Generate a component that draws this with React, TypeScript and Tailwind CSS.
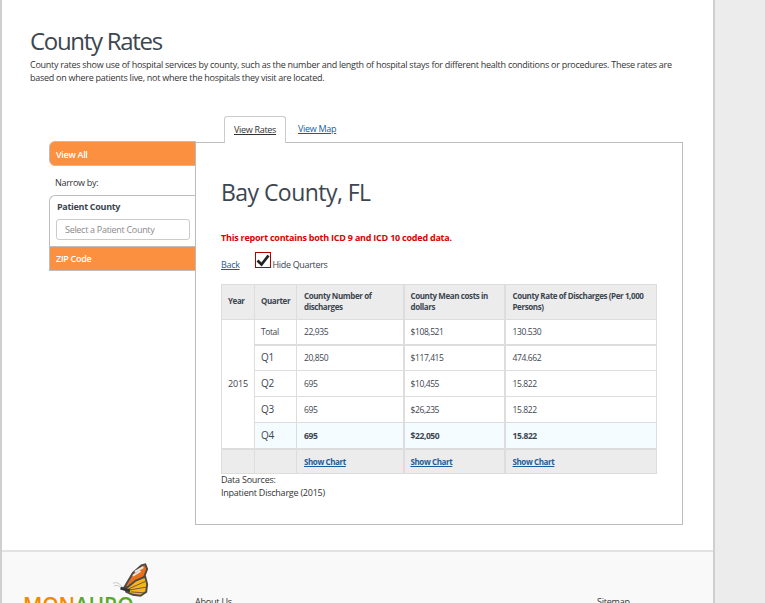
import React from "react";

const font = { fontFamily: '"Open Sans", sans-serif' };

const rows = [
  { q: "Total", n: "22,935", m: "$108,521", r: "130.530", h: "h-[25px]", thick: true, small: true },
  { q: "Q1", n: "20,850", m: "$117,415", r: "474.662", h: "h-[26px]" },
  { q: "Q2", n: "695", m: "$10,455", r: "15.822", h: "h-[26px]" },
  { q: "Q3", n: "695", m: "$26,235", r: "15.822", h: "h-[26px]" },
  { q: "Q4", n: "695", m: "$22,050", r: "15.822", h: "h-[26px]", bold: true },
];

const Butterfly = () => (
  <svg width="38" height="35" viewBox="0 0 40 36" className="absolute left-[110px] top-[11px]">
    <path d="M1 21 C4 19 8 21 11 25 M2 24 C5 22 8 24 11 27" fill="none" stroke="#c4c4c4" strokeWidth="1" />
    <path d="M13 25 L22 10 L31 2 L35 1 L37 6 L34 14 L27 18 L17 25 Z" fill="#e8701a" stroke="#4a4a4a" strokeWidth="2" />
    <path d="M14 27 L25 18 L35 14 L37 22 L36 30 L30 34 L22 33 L15 30 Z" fill="#f9b41c" stroke="#4a4a4a" strokeWidth="2" />
    <path d="M17 27 L35 19 M18 28 L36 25 M20 30 L34 31" stroke="#6a5a3a" strokeWidth="1" />
    <path d="M24 9 L33 4 M22 13 L30 8" stroke="#e8e8e8" strokeWidth="2" />
    <path d="M9 26 L19 29" stroke="#333" strokeWidth="3" />
  </svg>
);

export default function App() {
  return (
    <div className="h-[603px] w-[765px] overflow-hidden bg-[#ececec] text-[#3c4650]" style={font}>
      <div className="h-[603px] w-[715px] border-x-2 border-[#cfcfcf] bg-white">
        <div className="h-[550px] pl-[28px] pt-[24px]">
          <h1 className="text-[24px] leading-[34px] tracking-[-1.3px] text-[#3c4650]">County Rates</h1>
          <p className="w-[650px] text-[9px] leading-[13px] tracking-[-0.265px] text-[#333]">
            County rates show use of hospital services by county, such as the number and length of hospital stays for different health conditions or procedures. These rates are based on where patients live, not where the hospitals they visit are located.
          </p>

          <div className="mt-[32px] ml-[19px] flex items-start">
            <div className="mt-[25px] w-[147px] shrink-0 text-[9px] tracking-[-0.3px]">
              <div className="h-[25px] rounded-tl-[6px] rounded-bl-[6px] border border-[#bdbdbd] bg-[#fa9040] pl-[6px] font-semibold leading-[25px] text-white">
                View All
              </div>
              <div className="h-[29px] pl-[6px] leading-[33px] text-[#333]">Narrow by:</div>
              <div className="rounded-tl-[6px] border-l border-t border-[#bdbdbd] bg-white">
                <div className="pl-[7px] pt-[4px] font-bold leading-[13px]">Patient County</div>
                <div className="ml-[6px] mt-[6px] h-[21px] w-[134px] rounded-[3px] border border-[#ccc] pl-[8px] leading-[19px] text-[#8a8a8a]">
                  Select a Patient County
                </div>
                <div className="mt-[6px] h-[25px] border-y border-[#bdbdbd] bg-[#fa9040] pl-[6px] font-semibold leading-[23px] text-white">
                  ZIP Code
                </div>
              </div>
            </div>

            <div className="-ml-px w-[488px]">
              <div className="flex h-[26px] pl-[29px] text-[9px] tracking-[-0.3px]">
                <div className="relative z-10 h-[27px] w-[62px] rounded-t-[3px] border-x border-t border-[#ccc] bg-white text-center leading-[26px]">
                  <a className="text-[#333] underline">View Rates</a>
                </div>
                <a className="ml-[12px] leading-[26px] text-[#0f5fa8] underline">View Map</a>
              </div>
              <div className="h-[383px] border border-[#bdbdbd] bg-white pl-[25px] pt-[33px]">
                <h2 className="text-[23px] leading-[32px] tracking-[-0.55px] text-[#3c4650]">Bay County, FL</h2>
                <p className="mt-[23px] text-[9px] font-bold leading-[13px] tracking-[-0.23px] text-[#e00000]">
                  This report contains both ICD 9 and ICD 10 coded data.
                </p>
                <div className="mt-[8px] flex h-[19px] items-start text-[9px] tracking-[-0.33px]">
                  <a className="mt-[6px] leading-[13px] text-[#1c5d99] underline">Back</a>
                  <span className="ml-[15px] flex h-[16px] w-[16px] items-center justify-center border border-[#b00000]">
                    <svg width="14" height="14" viewBox="0 0 14 14">
                      <path d="M1.5 7.5 L5.5 11.5 L12.5 2.5" fill="none" stroke="#222" strokeWidth="2.8" />
                    </svg>
                  </span>
                  <span className="ml-[2px] mt-[6px] leading-[13px]">Hide Quarters</span>
                </div>

                <table className="mt-[13px] w-[435px] table-fixed border-collapse text-[8.5px] leading-[11px] tracking-[-0.4px]">
                  <colgroup>
                    <col className="w-[33px]" />
                    <col className="w-[42px]" />
                    <col className="w-[107px]" />
                    <col className="w-[101px]" />
                    <col className="w-[152px]" />
                  </colgroup>
                  <thead className="text-[8px]">
                    <tr className="h-[35px] bg-[#ececec] font-bold">
                      <th className="border border-[#ddd] pb-[4px] pl-[6px] text-left font-bold">Year</th>
                      <th className="border border-[#ddd] pb-[4px] pl-[6px] text-left font-bold">Quarter</th>
                      <th className="border border-[#ddd] pb-[2px] pl-[7px] text-left font-bold">County Number of discharges</th>
                      <th className="border-y border-l-2 border-r border-[#ddd] pb-[2px] pl-[6px] text-left font-bold">County Mean costs in dollars</th>
                      <th className="border-y border-l-2 border-r border-[#ddd] pb-[2px] pl-[7px] text-left font-bold">County Rate of Discharges (Per 1,000 Persons)</th>
                    </tr>
                  </thead>
                  <tbody>
                    {rows.map((row, i) => (
                      <tr key={row.q} className={`${row.h} ${row.bold ? "bg-[#f4fcff] font-bold" : "bg-white"} ${row.thick ? "border-b-2 border-[#ddd]" : ""}`}>
                        {i === 0 && (
                          <td rowSpan={5} className="border border-[#ddd] bg-white text-center text-[9px] font-normal tracking-[-0.2px]">
                            2015
                          </td>
                        )}
                        <td className={`border border-[#ddd] pl-[6px] font-normal ${row.small ? "" : "text-[10px]"}`}>{row.q}</td>
                        <td className="border border-[#ddd] pl-[7px]">{row.n}</td>
                        <td className="border-y border-l-2 border-r border-[#ddd] pl-[6px]">{row.m}</td>
                        <td className="border-y border-l-2 border-r border-[#ddd] pl-[7px]">{row.r}</td>
                      </tr>
                    ))}
                    <tr className="h-[25px] border-t-2 border-[#ddd] bg-[#ececec] text-[8px] font-bold text-[#1c5d99]">
                      <td className="border border-[#ddd]"></td>
                      <td className="border border-[#ddd]"></td>
                      <td className="border border-[#ddd] pl-[7px]"><a className="underline">Show Chart</a></td>
                      <td className="border-y border-l-2 border-r border-[#ddd] pl-[6px]"><a className="underline">Show Chart</a></td>
                      <td className="border-y border-l-2 border-r border-[#ddd] pl-[7px]"><a className="underline">Show Chart</a></td>
                    </tr>
                  </tbody>
                </table>
                <p className="-mt-px text-[9px] leading-[13px] tracking-[-0.23px] text-[#333]">Data Sources:<br />Inpatient Discharge (2015)</p>
              </div>
            </div>
          </div>
        </div>

        <footer className="relative h-[53px] border-t-2 border-[#e2e2e2] bg-[#f9f9f9]">
          <Butterfly />
          <div className="flex h-full items-start text-[9px] tracking-[-0.2px] text-[#333]">
            <div className="ml-[21px] mt-[38px] w-[172px] text-[21px] font-semibold leading-[30px]">
              <span className="text-[#f08a00]">MON</span>
              <span className="text-[#5aa82d]">AHRQ</span>
            </div>
            <a className="mt-[43px] leading-[13px]">About Us</a>
            <a className="ml-[365px] mt-[43px] leading-[13px]">Sitemap</a>
          </div>
        </footer>
      </div>
    </div>
  );
}
